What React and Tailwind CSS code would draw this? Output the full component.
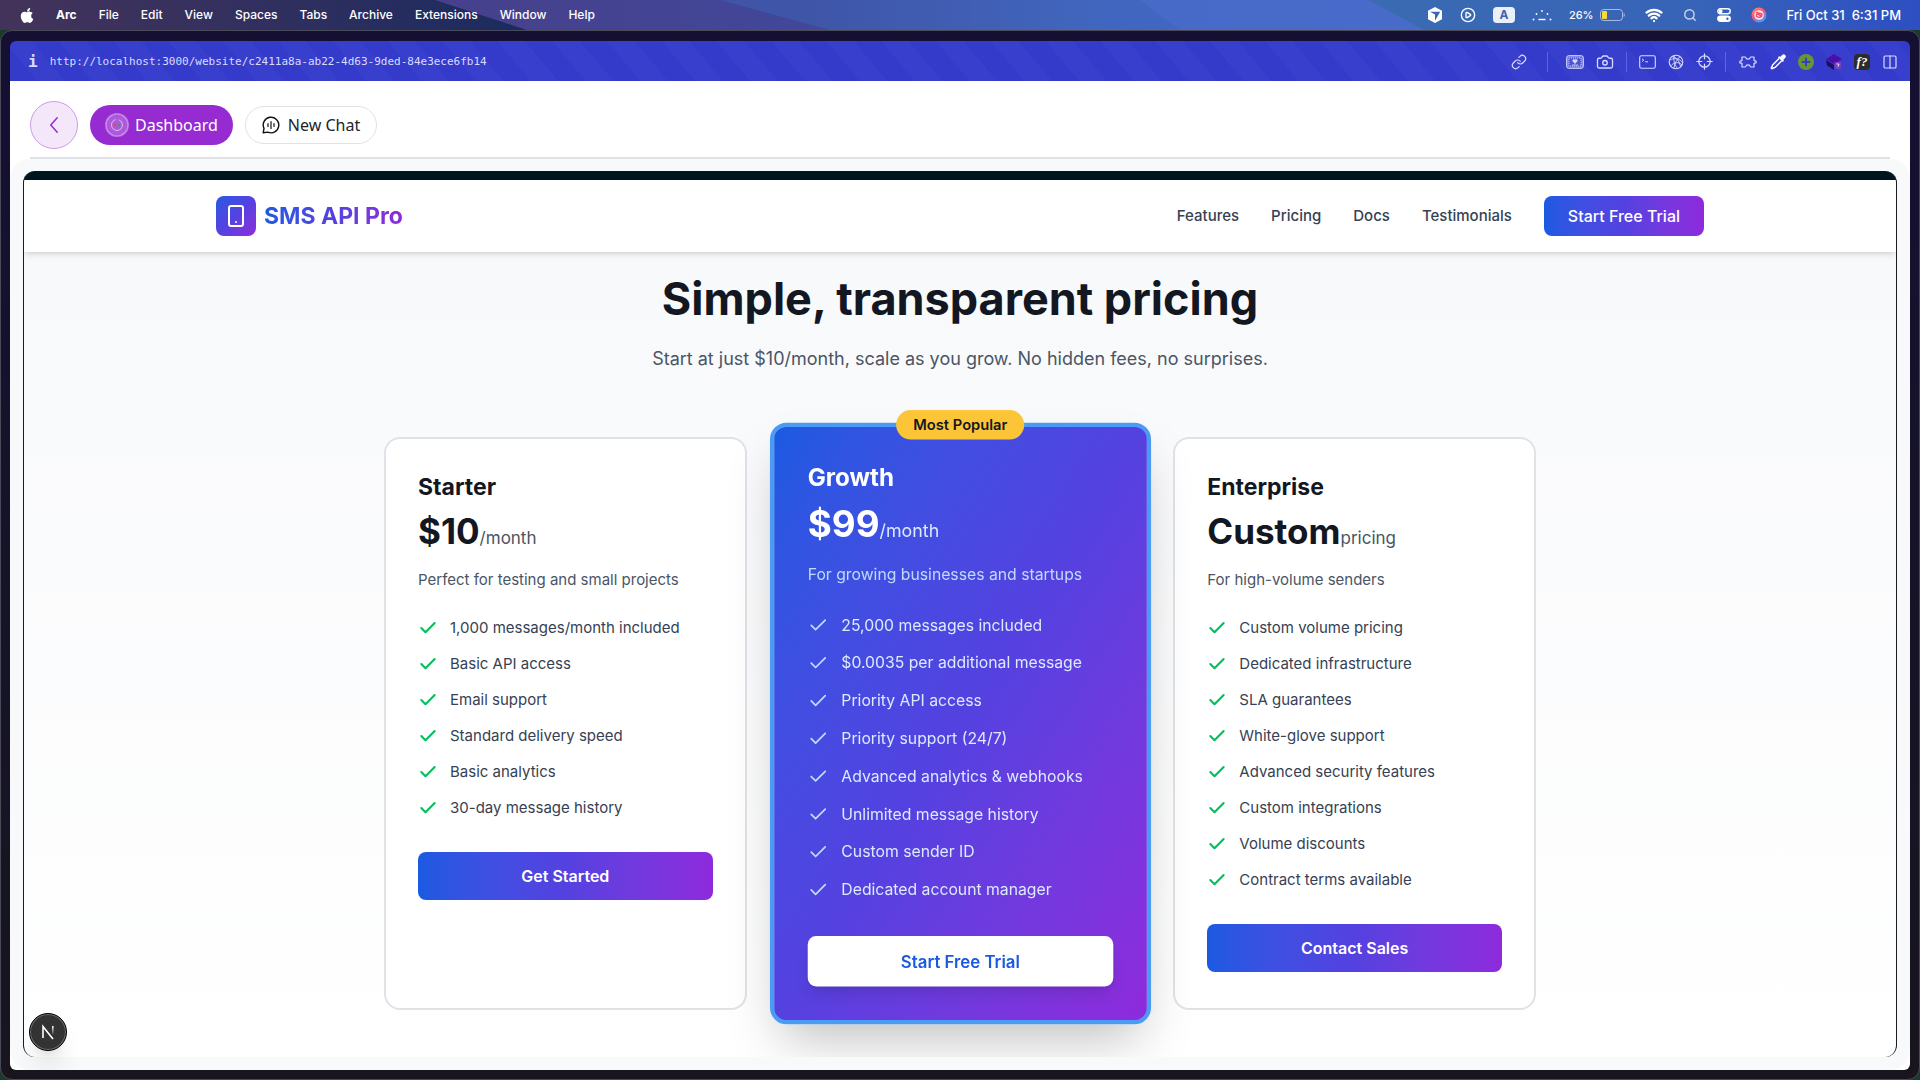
import {
  Camera,
  Check,
  ChevronLeft,
  CirclePlay,
  Columns2,
  Link,
  Plus,
  Search,
  Smartphone,
  Wifi
} from 'lucide-react';
import { FaApple } from 'react-icons/fa';

const menuItems = ['File', 'Edit', 'View', 'Spaces', 'Tabs', 'Archive', 'Extensions', 'Window', 'Help'];

const navLinks = ['Features', 'Pricing', 'Docs', 'Testimonials'];

const plans = [
  {
    name: 'Starter',
    price: '$10',
    unit: '/month',
    description: 'Perfect for testing and small projects',
    cta: 'Get Started',
    features: [
      '1,000 messages/month included',
      'Basic API access',
      'Email support',
      'Standard delivery speed',
      'Basic analytics',
      '30-day message history'
    ]
  },
  {
    name: 'Growth',
    price: '$99',
    unit: '/month',
    description: 'For growing businesses and startups',
    cta: 'Start Free Trial',
    popular: true,
    features: [
      '25,000 messages included',
      '$0.0035 per additional message',
      'Priority API access',
      'Priority support (24/7)',
      'Advanced analytics & webhooks',
      'Unlimited message history',
      'Custom sender ID',
      'Dedicated account manager'
    ]
  },
  {
    name: 'Enterprise',
    price: 'Custom',
    unit: 'pricing',
    description: 'For high-volume senders',
    cta: 'Contact Sales',
    features: [
      'Custom volume pricing',
      'Dedicated infrastructure',
      'SLA guarantees',
      'White-glove support',
      'Advanced security features',
      'Custom integrations',
      'Volume discounts',
      'Contract terms available'
    ]
  }
];

function Wallpaper() {
  return (
    <svg className="absolute inset-0 h-full w-full" viewBox="0 0 1920 30" preserveAspectRatio="none" aria-hidden="true">
      <defs>
        <linearGradient id="wall-left" gradientUnits="userSpaceOnUse" x1="0" x2="527" y1="0" y2="0">
          <stop offset="0" stopColor="#43335a" />
          <stop offset="0.45" stopColor="#33305f" />
          <stop offset="1" stopColor="#1b2b5e" />
        </linearGradient>
        <linearGradient id="wall-mid" x1="0" x2="1">
          <stop offset="0" stopColor="#46408a" />
          <stop offset="0.25" stopColor="#42479a" />
          <stop offset="0.45" stopColor="#4769c8" />
          <stop offset="1" stopColor="#4b6fcf" />
        </linearGradient>
        <linearGradient id="wall-right" x1="0" x2="1">
          <stop offset="0" stopColor="#3b6bb2" />
          <stop offset="0.6" stopColor="#3763b8" />
          <stop offset="1" stopColor="#2d4fc2" />
        </linearGradient>
      </defs>
      <rect width="1920" height="30" fill="url(#wall-left)" />
      <path d="M435 0H1920V30H527Z" fill="url(#wall-mid)" />
      <path d="M720 0H1140L1180 30H830Z" fill="#3c64b6" opacity="0.5" />
      <path d="M1368 0H1920V30H1424Z" fill="url(#wall-right)" />
    </svg>
  );
}

function CubeIcon() {
  return (
    <svg className="h-4 w-4" viewBox="0 0 16 16" fill="currentColor">
      <path fillRule="evenodd" d="M8 0l7 3.8v8.4L8 16l-7-3.8V3.8zM3 4.8l5 2.7v6.3L13.2 4.8z" />
    </svg>
  );
}

function DotsIcon() {
  return (
    <svg className="h-4 w-5" viewBox="0 0 20 16" fill="currentColor">
      <circle cx="1.5" cy="12.5" r="0.9" />
      <circle cx="4.5" cy="7" r="0.9" />
      <circle cx="10" cy="4" r="0.9" />
      <circle cx="15.5" cy="7" r="0.9" />
      <circle cx="18.5" cy="12.5" r="0.9" />
      <rect x="6.5" y="11.8" width="7" height="1.4" />
    </svg>
  );
}

function BatteryIcon() {
  return (
    <svg className="h-3 w-[25px]" viewBox="0 0 25 12">
      <rect x="0.5" y="0.5" width="22" height="11" rx="3.2" fill="none" stroke="#fff" strokeOpacity="0.55" />
      <rect x="2" y="2" width="5" height="8" rx="1" fill="#fcd835" />
      <path d="M23.6 4v4c.8-.3 1.2-1.1 1.2-2s-.4-1.7-1.2-2z" fill="#fff" fillOpacity="0.55" />
    </svg>
  );
}

function ControlIcon() {
  return (
    <svg className="h-3.5 w-3.5" viewBox="0 0 14 14" fill="none" stroke="currentColor" strokeWidth="1.4">
      <rect x="0.8" y="0.8" width="12.4" height="5" rx="2.5" />
      <circle cx="3.6" cy="3.3" r="1.3" fill="currentColor" />
      <rect x="0.8" y="8.2" width="12.4" height="5" rx="2.5" fill="currentColor" />
      <circle cx="10.4" cy="10.7" r="1.2" fill="#3763b8" stroke="none" />
    </svg>
  );
}

function AssistantIcon() {
  return (
    <svg className="h-4 w-4" viewBox="0 0 16 16">
      <defs>
        <linearGradient id="assistant" x1="0" y1="0" x2="0.6" y2="1">
          <stop offset="0" stopColor="#ff9d4d" />
          <stop offset="0.5" stopColor="#ff4f7b" />
          <stop offset="1" stopColor="#3aa0ff" />
        </linearGradient>
      </defs>
      <circle cx="8" cy="8" r="7.5" fill="url(#assistant)" />
      <circle cx="8" cy="8" r="4.8" fill="#ffe9ef" />
      <path d="M5 5.5l5.5 1.2c1.2.8.3 2.3-1 1.8L7 7.4c-1.600-.4-2.500 1.300-1 2.200 1.500.9 3.500.9 5-.6" fill="none" stroke="#f04b6f" strokeWidth="1.4" />
    </svg>
  );
}

function MenuBar() {
  return (
    <header className="relative h-[30px]">
      <Wallpaper />
      <div className="relative flex h-full items-center justify-between pr-[19px] pl-5 text-white">
        <nav className="flex items-center gap-[22px] text-xs leading-5 font-medium">
          <FaApple className="h-[17px] w-[14px]" />
          <span className="font-bold">Arc</span>
          {menuItems.map((item) => (
            <span key={item}>{item}</span>
          ))}
        </nav>
        <div className="flex items-center gap-5">
          <div className="flex items-center gap-[17px]">
            <CubeIcon />
            <CirclePlay className="h-4 w-4" />
            <span className="flex h-4 w-[22px] items-center justify-center rounded bg-white/90 text-xs font-bold text-[#3a66b0]">
              A
            </span>
            <DotsIcon />
            <div className="flex items-center gap-1.5 text-[11px] font-medium">
              <span>26%</span>
              <BatteryIcon />
            </div>
          </div>
          <Wifi className="h-[18px] w-[18px]" strokeWidth={3} />
          <Search className="h-3.5 w-3.5 opacity-70" strokeWidth={2.5} />
          <ControlIcon />
          <AssistantIcon />
          <span className="text-[13px] leading-5 font-medium whitespace-nowrap">Fri Oct 31&nbsp; 6:31 PM</span>
        </div>
      </div>
    </header>
  );
}

function Separator() {
  return <span className="h-5 w-px bg-[#5d64e6]" />;
}

function StampIcon() {
  return (
    <svg className="h-4 w-[18px]" viewBox="0 0 18 16" fill="none" stroke="currentColor">
      <rect x="0.7" y="1.7" width="16.600" height="12.600" rx="2" fill="currentColor" fillOpacity="0.35" />
      <rect x="3" y="4" width="12" height="8" fill="#343bca" fillOpacity="0.6" strokeWidth="0.8" strokeDasharray="1 1" />
      <path d="M9 9.500L6.800 7c-.3-1.400 1.500-1.900 2.200-.8.700-1.100 2.500-.6 2.200.8zM6 11h6" fill="currentColor" strokeWidth="0.8" />
    </svg>
  );
}

function TerminalIcon() {
  return (
    <svg className="h-[14px] w-[17px]" viewBox="0 0 17 14" fill="none" stroke="currentColor" strokeWidth="1.1">
      <rect x="0.7" y="0.7" width="15.600" height="12.600" rx="1.800" />
      <path d="M3 3.800l1.800 1.400L3 6.600M6.200 6.800h2.800" strokeWidth="1" />
    </svg>
  );
}

function GlobeIcon() {
  return (
    <svg className="h-4 w-4" viewBox="0 0 16 16" fill="none" stroke="currentColor" strokeWidth="1.1">
      <circle cx="8" cy="8" r="6.800" />
      <path d="M1.500 6.500C6 3 11 4.500 14.600 8.500M2.600 12C6 8 10.500 7.500 14 10.800M6.500 1.400C5 6 6.500 11 9.500 14.500M12.200 2.600C9 5 6.500 9.500 5.800 14.400M4 2.600c3 .4 7 2.400 8.600 10.400" strokeWidth="0.9" />
    </svg>
  );
}

function TargetIcon() {
  return (
    <svg className="h-[17px] w-[17px]" viewBox="0 0 17 17" fill="none" stroke="currentColor" strokeWidth="1.2" strokeLinecap="round">
      <circle cx="8.500" cy="8.500" r="5.700" />
      <path d="M8.500.8v5M8.500 11.200v5M.8 8.500h5M11.200 8.500h5" />
    </svg>
  );
}

function ExtensionsIcon() {
  return (
    <svg className="h-4 w-5" viewBox="0 0 20 16" fill="none" stroke="currentColor" strokeWidth="1.200" strokeLinejoin="round">
      <path d="M4 3h3.200c.3 0 .5.300.600.600.200 1 1 1.600 2.200 1.600s2-.6 2.200-1.600c.1-.3.300-.6.600-.6H16v3.300c0 .3.300.5.600.5h.6c1.400 0 1.400 2.400 0 2.400h-.6c-.3 0-.6.200-.6.500V13h-3.200c-.3 0-.5-.3-.6-.6-.2-1-1-1.600-2.200-1.600s-2 .6-2.200 1.600c-.1.300-.3.600-.6.600H4V9.700c0-.3-.3-.5-.6-.5h-.6c-1.400 0-1.400-2.400 0-2.400h.6c.3 0 .6-.2.600-.5z" />
    </svg>
  );
}

function DropperIcon() {
  return (
    <svg className="h-4 w-4" viewBox="0 0 16 16">
      <path d="M9.300 4.300L2.600 11c-.5.500-.3 1.500-.9 2.200l-.5.700.900.9.7-.5c.7-.6 1.700-.4 2.200-.9l6.700-6.700" fill="none" stroke="#fff" strokeWidth="1.400" />
      <path d="M8 3.200l4.800 4.800 1.200-1.200-.8-.9 1.900-1.900a2 2 0 0 0 0-2.900 2 2 0 0 0-2.900 0L10.100 2.900 9.200 2z" fill="#fff" />
    </svg>
  );
}

function StackIcon() {
  return (
    <svg className="h-4 w-4" viewBox="0 0 16 16">
      <path d="M8 0l8 5-8 5-8-5z" fill="#4a0fa8" />
      <path d="M0 6l8 5v5l-7-4.500z" fill="#1c0d5e" />
      <rect x="8.500" y="8" width="6.500" height="7" rx="1" fill="#7a3cc0" />
      <path d="M10.500 10h2.500l-1 2.800" fill="none" stroke="#fff" strokeWidth="0.8" />
    </svg>
  );
}

function AddressBar() {
  return (
    <div className="flex h-10 items-center justify-between rounded-t-md bg-[repeating-linear-gradient(50deg,#343bca_0px,#343bca_21px,#383fcd_21px,#383fcd_42px)] pt-px pr-3 pl-[18px] text-[#d9dcff]">
      <div className="flex items-center gap-3 font-['DejaVu_Sans_Mono',monospace]">
        <span className="text-base leading-5 font-bold">i</span>
        <span className="text-[11px] leading-5">http://localhost:3000/website/c2411a8a-ab22-4d63-9ded-84e3ece6fb14</span>
      </div>
      <div className="flex items-center gap-3">
        <Link className="mr-2 h-4 w-4" strokeWidth={1.75} />
        <Separator />
        <div className="ml-1.5">
          <StampIcon />
        </div>
        <Camera className="h-[18px] w-[18px]" strokeWidth={1.75} />
        <Separator />
        <TerminalIcon />
        <GlobeIcon />
        <TargetIcon />
        <Separator />
        <ExtensionsIcon />
        <DropperIcon />
        <span className="flex h-4 w-4 items-center justify-center rounded-full bg-[#6a9632] text-[#353dcc]">
          <Plus className="h-3 w-3" strokeWidth={4} />
        </span>
        <StackIcon />
        <span className="flex h-4 w-4 items-center justify-center rounded-sm bg-[#2c2c2c] font-['Liberation_Serif',serif] text-[13px] font-bold text-white italic">
          f?
        </span>
        <Columns2 className="h-4 w-4" strokeWidth={1.75} />
      </div>
    </div>
  );
}

function Toolbar() {
  return (
    <div className="mx-5 flex items-center gap-3 border-b-2 border-[#e1e2e8] pt-5 pb-2 font-['Noto_Sans',sans-serif]">
      <button
        aria-label="Back"
        className="flex h-12 w-12 items-center justify-center rounded-full border border-[#d09ae8] bg-[#f4e7fa] text-[#962bd2]"
      >
        <svg className="h-6 w-6" viewBox="0 0 24 24" fill="none" stroke="currentColor" strokeWidth="1.500" strokeLinecap="round" strokeLinejoin="round">
          <path d="M15.200 4.800L8.800 12l6.400 7.200" />
        </svg>
      </button>
      <button className="flex h-10 items-center gap-1.5 rounded-full bg-[#962bd2] px-[15px] text-white">
        <svg className="h-6 w-6" viewBox="0 0 24 24" fill="none">
          <circle cx="12" cy="12" r="11.200" fill="#fff" fillOpacity="0.220" stroke="#fff" strokeOpacity="0.350" strokeWidth="1.600" />
          <circle cx="12" cy="12" r="5.500" stroke="#fff" strokeOpacity="0.550" strokeDasharray="24 3" />
          <circle cx="10" cy="12" r="1.500" fill="#e0476a" />
          <circle cx="14" cy="12" r="1.500" fill="#4f8f8a" />
        </svg>
        Dashboard
      </button>
      <button className="flex h-[38px] items-center gap-2 rounded-full border border-[#e2e2e6] px-4 text-[#1a2530]">
        <svg className="h-[18px] w-[18px]" viewBox="0 0 18 18" fill="none" stroke="#111" strokeWidth="1.400" strokeLinecap="round">
          <path d="M1.200 16.800l.8-4.400A7.800 7.800 0 1 1 5.800 16.100z" strokeLinejoin="round" />
          <path d="M6 7.600v2.800M9 5.500v7M12 7.600v2.800" strokeWidth="1.200" />
        </svg>
        New Chat
      </button>
    </div>
  );
}

function SiteHeader() {
  return (
    <header className="relative z-20 bg-white shadow-md">
      <div className="mx-auto flex max-w-[1536px] items-center justify-between px-6 py-4">
        <div className="flex items-center gap-2">
          <span className="flex h-10 w-10 items-center justify-center rounded-lg bg-linear-to-br from-[#1a5ae2] via-[#5441e0] to-[#8e2adc] text-white">
            <Smartphone className="h-6 w-6" />
          </span>
          <span className="bg-linear-to-r from-[#1a5ae2] via-[#5441e0] to-[#8e2adc] bg-clip-text text-[23px] leading-8 font-bold text-transparent">
            SMS API Pro
          </span>
        </div>
        <nav className="flex items-center gap-8 font-medium text-gray-700">
          {navLinks.map((link) => (
            <a key={link} href="#" className="text-[15px] leading-6">
              {link}
            </a>
          ))}
          <button className="h-10 rounded-lg bg-linear-to-r from-[#1a5ae2] via-[#5441e0] to-[#8e2adc] px-6 text-white">
            Start Free Trial
          </button>
        </nav>
      </div>
    </header>
  );
}

function PlanCard({ plan }) {
  const { popular } = plan;
  return (
    <article
      className={`relative rounded-2xl p-8 ${
        popular
          ? 'z-10 scale-105 border-4 border-[#4b9bf5] bg-linear-to-br from-[#1a5ae2] via-[#5441e0] to-[#8e2adc] text-white shadow-2xl'
          : 'border-2 border-[#e1e2e8] bg-white text-[#131722]'
      }`}
    >
      {popular && (
        <span className="absolute -top-4 left-1/2 -translate-x-1/2 rounded-full bg-[#fcc537] px-4 py-1 text-sm font-semibold whitespace-nowrap text-[#131722]">
          Most Popular
        </span>
      )}
      <h3 className="mb-2 text-[23px] leading-8 font-bold">{plan.name}</h3>
      <div className="mb-4 flex items-baseline">
        <span className="text-[35px] leading-[41px] font-bold">{plan.price}</span>
        <span className={`text-[17px] leading-6 ${popular ? 'text-blue-100' : 'text-gray-600'}`}>{plan.unit}</span>
      </div>
      <p className={`mb-6 text-[15px] leading-6 ${popular ? 'text-blue-200' : 'text-gray-600'}`}>{plan.description}</p>
      <ul className="mb-8 space-y-3 text-[15px] leading-6">
        {plan.features.map((feature) => (
          <li key={feature} className="flex items-start gap-3">
            <Check
              className={`mt-0.5 h-5 w-5 shrink-0 ${popular ? 'text-blue-200' : 'text-[#00c05a]'}`}
              strokeWidth={popular ? 2 : 2.5}
            />
            <span className={popular ? 'text-blue-100' : 'text-gray-700'}>{feature}</span>
          </li>
        ))}
      </ul>
      <button
        className={`w-full rounded-lg py-3 font-semibold ${
          popular
            ? 'bg-white text-[#1a5ae2] shadow-lg'
            : 'bg-linear-to-r from-[#1a5ae2] via-[#5441e0] to-[#8e2adc] text-white'
        }`}
      >
        {plan.cta}
      </button>
    </article>
  );
}

function Pricing() {
  return (
    <section className="flex-1 bg-linear-to-b from-[#f8f9fb] to-white px-6 pt-[23px]">
      <h2 className="mb-[22px] text-center text-[45px] leading-12 font-bold text-[#131722]">
        Simple, transparent pricing
      </h2>
      <p className="mb-16 text-center text-lg leading-7 text-gray-600">
        Start at just $10/month, scale as you grow. No hidden fees, no surprises.
      </p>
      <div className="mx-auto grid max-w-6xl grid-cols-3 gap-8">
        {plans.map((plan) => (
          <PlanCard key={plan.name} plan={plan} />
        ))}
      </div>
    </section>
  );
}

function DevBadge() {
  return (
    <button
      aria-label="Open dev tools"
      className="absolute bottom-[19px] left-[19px] z-30 flex h-[38px] w-[38px] items-center justify-center rounded-full border border-black bg-[#333] shadow-xl ring-1 ring-white/30 ring-inset"
    >
      <svg className="h-4 w-4" viewBox="0 0 16 16" fill="none">
        <defs>
          <linearGradient id="dev-stem" x1="0" y1="0" x2="0" y2="1">
            <stop offset="0" stopColor="#fff" />
            <stop offset="1" stopColor="#fff" stopOpacity="0" />
          </linearGradient>
        </defs>
        <path d="M3 14V2.500L13 15" stroke="#fff" strokeWidth="1.600" />
        <rect x="12" y="2" width="1.600" height="9" fill="url(#dev-stem)" />
      </svg>
    </button>
  );
}

export default function App() {
  return (
    <div className="flex min-h-screen flex-col bg-[#1b3a2a] font-['Inter',sans-serif]">
      <MenuBar />
      <div className="flex flex-1 flex-col rounded-xl border border-[#4a4a5a] bg-linear-to-b from-[#150f33] to-[#18151e] px-[9px] pt-2.5 pb-[9px]">
        <AddressBar />
        <div className="flex flex-1 flex-col overflow-hidden rounded-b-md bg-white">
          <Toolbar />
          <main className="relative flex flex-1 flex-col rounded-[20px] bg-[#f8f9fb] px-[13px] pt-3 pb-[13px]">
            <div className="flex flex-1 flex-col overflow-hidden rounded-xl border-x border-[#1c1c20] bg-[#001520] pt-[9px]">
              <SiteHeader />
              <Pricing />
            </div>
            <DevBadge />
          </main>
        </div>
      </div>
    </div>
  );
}
